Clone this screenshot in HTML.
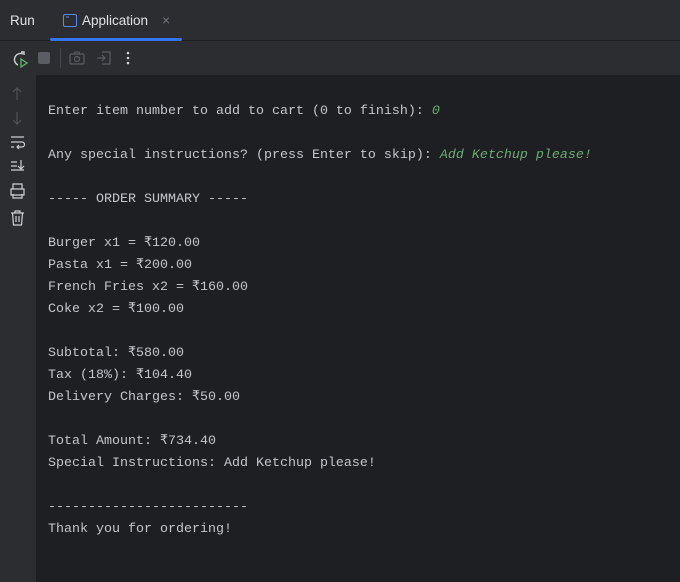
<!DOCTYPE html>
<html><head><meta charset="utf-8"><style>
body{margin:0;width:680px;height:582px;background:#1e1f22;overflow:hidden;font-family:"Liberation Sans",sans-serif;position:relative}
.top{position:absolute;left:0;top:0;width:680px;height:40px;background:#2b2d30;border-bottom:1px solid #1e1f22}
.tb{position:absolute;left:0;top:41px;width:680px;height:34px;background:#2b2d30}
.gut{position:absolute;left:0;top:75px;width:36px;height:507px;background:#2b2d30}
.run{position:absolute;left:10px;top:13px;color:#dfe1e5;font-size:13.5px}
.app{position:absolute;left:82px;top:13px;color:#dfe1e5;font-size:13.5px}
.x{position:absolute;left:162px;top:12px;color:#6f737a;font-size:14px}
.ul{position:absolute;left:50px;top:38px;width:132px;height:3px;background:#3574f0;border-radius:2px}
pre{position:absolute;left:48px;top:101px;margin:0;font-family:"Liberation Mono",monospace;font-size:13.33px;line-height:22px;color:#c4c6cc}
i{color:#6aab73}
svg{position:absolute}
</style></head><body>
<div class="top"></div><div class="tb"></div><div class="gut"></div>
<div class="run">Run</div>
<svg style="left:63px;top:14px" width="14" height="13"><rect x="0.5" y="0.5" width="13" height="12" rx="1.5" fill="none" stroke="#548af7"/><line x1="3" y1="3" x2="6" y2="3" stroke="#548af7"/></svg>
<div class="app">Application</div><div class="x">×</div><div class="ul"></div>
<svg style="left:10px;top:50px" width="18" height="18"><path d="M13 4A6 6 0 1 0 8 15" fill="none" stroke="#ced0d6" stroke-width="1.4"/><path d="M11 2h3v3" fill="none" stroke="#ced0d6" stroke-width="1.4"/><path d="M11 9l6 4-6 4z" fill="none" stroke="#5fb865" stroke-width="1.3"/></svg>
<div style="position:absolute;left:38px;top:52px;width:12px;height:12px;background:#5a5d63;border-radius:2px"></div>
<div style="position:absolute;left:60px;top:48px;width:1px;height:20px;background:#43454a"></div>
<svg style="left:69px;top:50px" width="16" height="16"><rect x="1" y="4" width="14" height="10" rx="1.5" fill="none" stroke="#5a5d63" stroke-width="1.2"/><circle cx="8" cy="9" r="2.5" fill="none" stroke="#5a5d63" stroke-width="1.2"/><path d="M5 4l1-2h4l1 2" fill="none" stroke="#5a5d63"/></svg>
<svg style="left:96px;top:50px" width="16" height="16"><path d="M6 2h8v12H6M1 8h8M6 5l3 3-3 3" fill="none" stroke="#5a5d63" stroke-width="1.2"/></svg>
<svg style="left:122px;top:50px" width="12" height="16"><circle cx="6" cy="3" r="1.3" fill="#ced0d6"/><circle cx="6" cy="8" r="1.3" fill="#ced0d6"/><circle cx="6" cy="13" r="1.3" fill="#ced0d6"/></svg>
<svg style="left:9px;top:86px" width="18" height="150" fill="none" stroke-width="1.2">
<path d="M8 2v12M4 6l4-4 4 4" stroke="#4e5157"/>
<path d="M8 26v12M4 34l4 4 4-4" stroke="#4e5157"/>
<path d="M2 51h13M2 56h11a2.5 2.5 0 0 1 0 5H8M10 59l-2 2 2 2M2 61h3" stroke="#ced0d6"/>
<path d="M2 76h6M2 80h6M2 84h13M12 74v9M9 80l3 3 3-3" stroke="#ced0d6"/>
<path d="M4 103v-5h9v5M2 103h13v6H2zM4 108v4h9v-4" stroke="#ced0d6"/>
<path d="M2 127h13M6 127v-2h5v2M3.5 127l1 12h8l1-12M7 130v6M10 130v6" stroke="#ced0d6"/>
</svg>
<pre>Enter item number to add to cart (0 to finish): <i>0</i>

Any special instructions? (press Enter to skip): <i>Add Ketchup please!</i>

----- ORDER SUMMARY -----

Burger x1 = ₹120.00
Pasta x1 = ₹200.00
French Fries x2 = ₹160.00
Coke x2 = ₹100.00

Subtotal: ₹580.00
Tax (18%): ₹104.40
Delivery Charges: ₹50.00

Total Amount: ₹734.40
Special Instructions: Add Ketchup please!

-------------------------
Thank you for ordering!</pre>
</body></html>
